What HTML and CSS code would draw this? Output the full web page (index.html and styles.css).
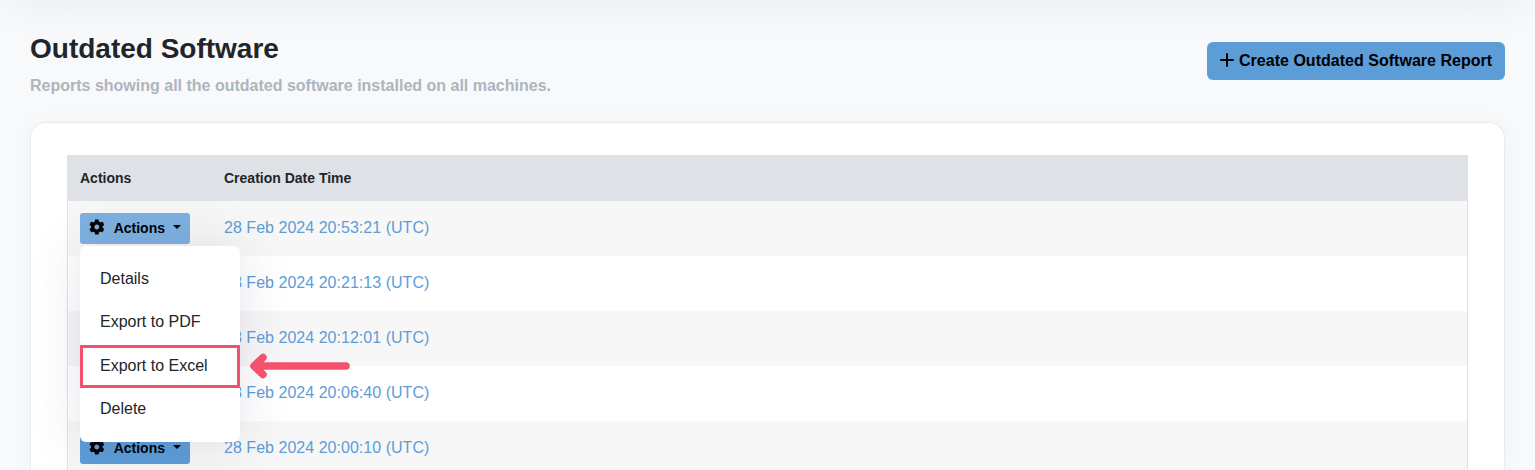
FILE: index.html
```html
<!DOCTYPE html>
<html lang="en">
<head>
<meta charset="utf-8">
<title>Outdated Software</title>
<link rel="stylesheet" href="styles.css">
</head>
<body>
<svg class="defs" aria-hidden="true">
  <symbol id="gear" viewBox="0 0 512 512"><path d="M487.400 315.700l-42.600-24.600c4.300-23.200 4.300-47 0-70.200l42.600-24.600c4.900-2.800 7.100-8.600 5.500-14-11.100-35.600-30-67.800-54.700-94.600-3.800-4.100-10-5.100-14.800-2.300L380.800 110c-17.900-15.400-38.500-27.300-60.800-35.100V25.800c0-5.600-3.900-10.500-9.400-11.700-36.700-8.200-74.300-7.800-109.200 0-5.500 1.200-9.400 6.100-9.400 11.700V75c-22.200 7.900-42.800 19.800-60.800 35.100L88.700 85.500c-4.900-2.800-11-1.900-14.800 2.300-24.700 26.700-43.600 58.900-54.700 94.600-1.700 5.400.6 11.200 5.500 14L67.300 221c-4.300 23.200-4.300 47 0 70.200l-42.600 24.600c-4.900 2.800-7.100 8.600-5.500 14 11.100 35.600 30 67.800 54.700 94.600 3.800 4.100 10 5.100 14.800 2.300l42.600-24.600c17.900 15.400 38.500 27.300 60.800 35.100v49.200c0 5.600 3.900 10.500 9.400 11.700 36.700 8.200 74.300 7.800 109.200 0 5.500-1.200 9.400-6.100 9.400-11.700v-49.200c22.200-7.900 42.800-19.800 60.800-35.100l42.600 24.600c4.900 2.800 11 1.900 14.800-2.300 24.700-26.700 43.600-58.900 54.700-94.600 1.500-5.500-.7-11.300-5.600-14.100zM256 336c-44.100 0-80-35.900-80-80s35.900-80 80-80 80 35.900 80 80-35.900 80-80 80z"/></symbol>
</svg>
<div class="topbar"></div>
<main class="page">
  <header class="page-head">
    <div>
      <h1 class="title">Outdated Software</h1>
      <p class="subtitle">Reports showing all the outdated software installed on all machines.</p>
    </div>
    <button class="create"><svg class="plus" viewBox="0 0 14 14"><path d="M7 1v12M1 7h12"/></svg>Create Outdated Software Report</button>
  </header>
  <section class="card">
    <div class="table">
      <div class="row head"><span>Actions</span><span>Creation Date Time</span></div>
      <div class="row">
        <div class="dropdown">
          <button class="action open"><svg class="gear"><use href="#gear"/></svg>Actions<i class="caret"></i></button>
          <div class="menu">
            <a class="item">Details</a>
            <a class="item">Export to PDF</a>
            <a class="item marked">Export to Excel
              <svg class="arrow" viewBox="0 0 102 26"><path d="M6 13H97M14 4.500L5 13l9 8.500"/></svg></a>
            <a class="item">Delete</a>
          </div>
        </div>
        <a class="date">28 Feb 2024 20:53:21 (UTC)</a>
      </div>
      <div class="row"><span></span><a class="date">28 Feb 2024 20:21:13 (UTC)</a></div>
      <div class="row"><span></span><a class="date">28 Feb 2024 20:12:01 (UTC)</a></div>
      <div class="row"><span></span><a class="date">28 Feb 2024 20:06:40 (UTC)</a></div>
      <div class="row"><button class="action"><svg class="gear"><use href="#gear"/></svg>Actions<i class="caret"></i></button><a class="date">28 Feb 2024 20:00:10 (UTC)</a></div>
    </div>
  </section>
</main>
</body>
</html>
```
FILE: styles.css
```css
* { box-sizing: border-box; }
body {
  margin: 0;
  height: 470px;
  overflow: hidden;
  background: #f8f9fb;
  color: #212529;
  font: 16px/24px "Liberation Sans", Arial, sans-serif;
}
.defs { position: absolute; width: 0; height: 0; }
.topbar {
  height: 60px;
  margin: -60px 15px 0;
  box-shadow: 0 0 50px rgba(20, 20, 25, .07);
}
.page { padding: 30px 30px 0; }
.page-head {
  display: flex;
  justify-content: space-between;
  align-items: flex-start;
  height: 92px;
}
.title { margin: 2px 0 8px; font-size: 28px; line-height: 34px; font-weight: 700; }
.subtitle { margin: 0; line-height: 24px; font-weight: 700; color: #adb5bd; }
button { border: 0; font-family: inherit; font-weight: 700; color: #000; white-space: nowrap; }
.create {
  display: flex;
  align-items: center;
  width: 298px;
  height: 38px;
  margin-top: 12px;
  padding: 0 0 1px 13px;
  border-radius: 6px;
  background: #5c9dd8;
  font-size: 16px;
  letter-spacing: .02px;
}
.plus { width: 14px; height: 14px; margin: -1px 5px 0 0; fill: none; stroke: #000; stroke-width: 2; stroke-linecap: round; }
.card {
  height: 348px;
  padding: 32px 36px 0;
  overflow: hidden;
  border: 1px solid #e9ecef;
  border-bottom: 0;
  border-radius: 16px 16px 0 0;
  background: #fff;
  box-shadow: 0 0 20px rgba(20, 30, 50, .03);
}
.table { border: 1px solid #dee2e6; }
.row {
  display: grid;
  grid-template-columns: 144px 1fr;
  align-items: center;
  height: 55px;
  padding: 0 12px;
}
.row:nth-child(even) { background: #f7f7f7; }
.head { height: 45px; padding-bottom: 2px; background: #dee2e6; font-size: 14px; font-weight: 700; }
.date { color: #5c9dd8; padding-bottom: 1px; letter-spacing: .03px; }
.action {
  display: flex;
  align-items: center;
  width: 110px;
  height: 31px;
  padding: 0 9px 2px;
  border-radius: 3px;
  background: #5c9dd8;
  font-size: 14px;
}
.open { background: #7db1e0; }
.gear { width: 16px; height: 16px; margin: -1px 9px 0 0; }
.caret {
  margin: -1px 0 0 8px;
  border: 4px solid transparent;
  border-top-color: #000;
  border-bottom: 0;
}
.dropdown { position: relative; width: 110px; }
.menu {
  position: absolute;
  z-index: 2;
  top: 33px;
  left: 0;
  width: 160px;
  height: 196px;
  padding: 11px 0;
  border-radius: 6px;
  background: #fff;
  box-shadow: 0 0 50px rgba(82, 63, 105, .15);
}
.item { position: relative; display: block; height: 43.400px; padding: 10px 20px; }
.marked::after { content: ""; position: absolute; inset: 1px 0 -1px; border: 3px solid #f4516c; }
.arrow {
  position: absolute;
  top: 9px;
  left: 169px;
  width: 102px;
  height: 26px;
  fill: none;
  stroke: #f4516c;
  stroke-width: 7.500;
  stroke-linecap: round;
  stroke-linejoin: round;
}
```
